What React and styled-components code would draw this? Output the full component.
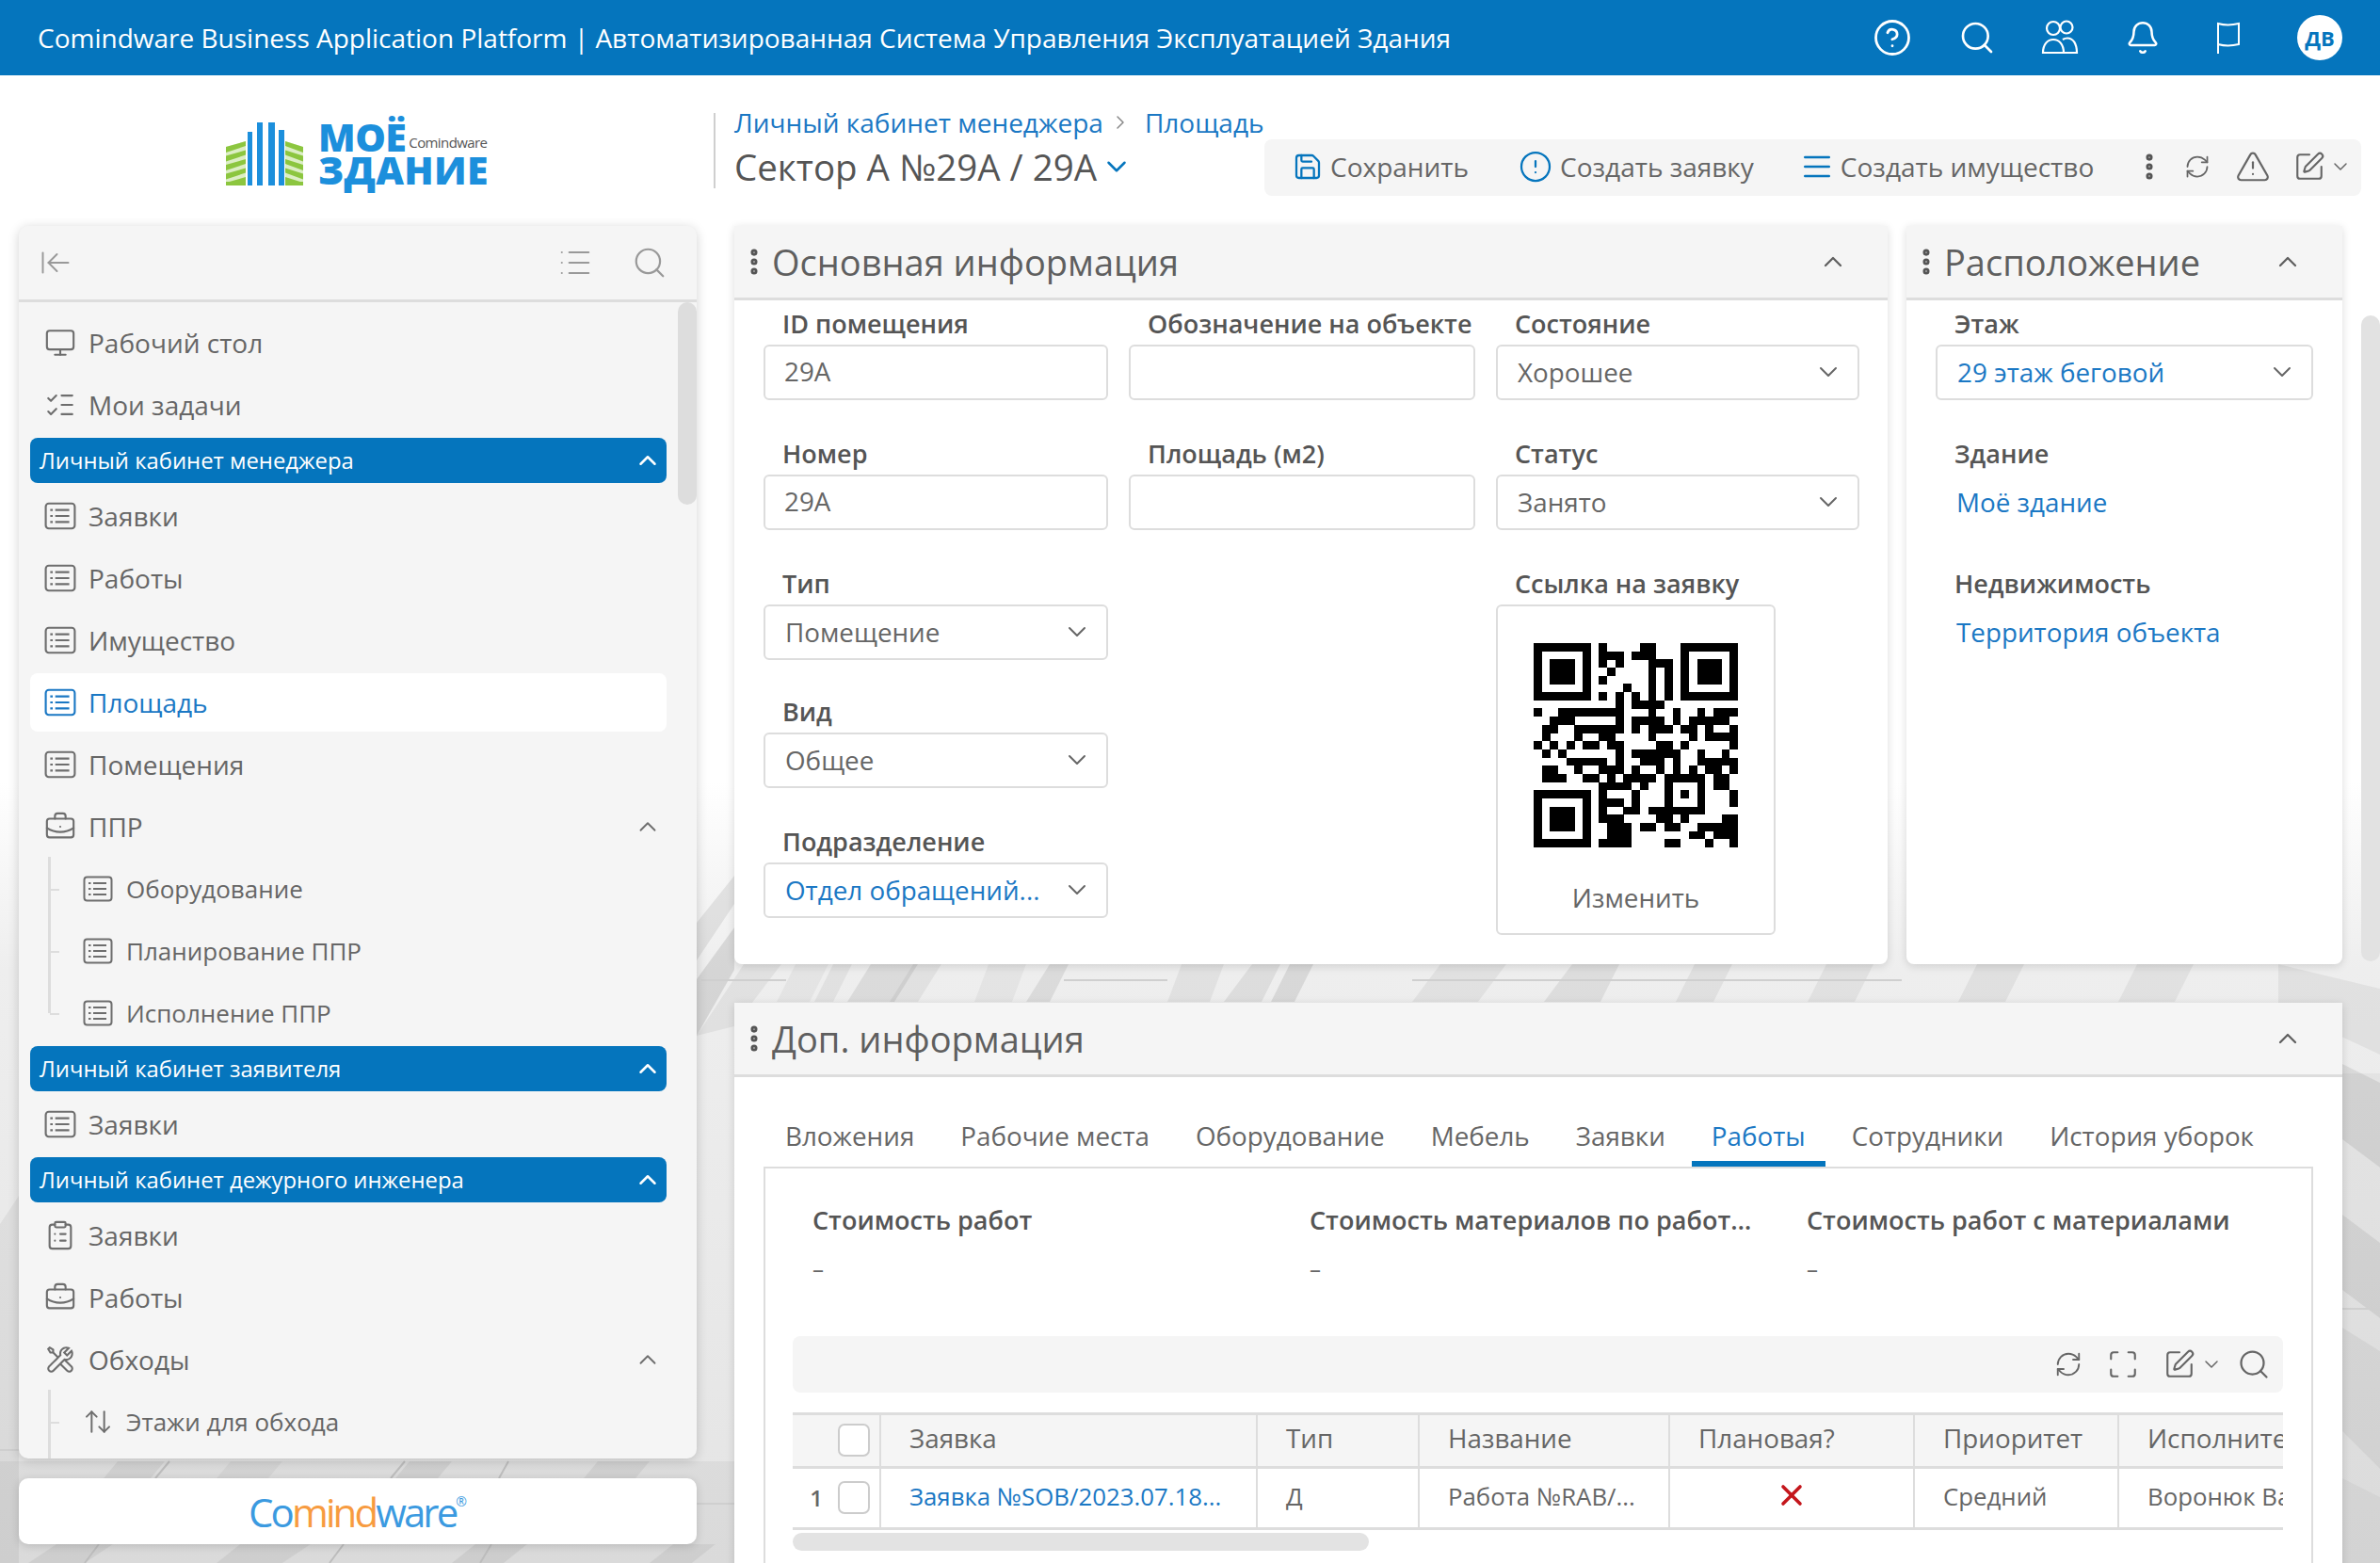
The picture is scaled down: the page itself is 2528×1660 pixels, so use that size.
import React from 'react';
import styled, { createGlobalStyle } from 'styled-components';
import {
  ArrowLeftToLine, ArrowUpDown, Bell, BriefcaseBusiness, ChevronDown, ChevronUp, ChevronRight,
  CircleAlert, CircleHelp, ClipboardList, EllipsisVertical, ListChecks, Maximize, Monitor,
  RefreshCw, Save, Search, SquarePen, TriangleAlert, AlignJustify, List, X,
} from 'lucide-react';
import { LiaToolsSolid } from 'react-icons/lia';

const BLUE = '#0575bd';
const LINK = '#1b78c4';
const TEXT = '#666';

const GlobalStyle = createGlobalStyle`
  html, body { margin: 0; padding: 0; height: 100%; }
  body {
    font-family: "Open Sans", "Noto Sans", sans-serif;
    color: ${TEXT};
    overflow: hidden;
    background: #fff;
  }
  * { box-sizing: border-box; }
`;

const Page = styled.div`
  position: relative;
  height: 100vh;
  overflow: hidden;
  display: flex;
  flex-direction: column;
  isolation: isolate;
`;

const Backdrop = styled.svg`
  position: absolute;
  inset: 0;
  z-index: -1;
`;

/* шапка */
const TopHeader = styled.header`
  flex: none;
  height: 80px;
  background: ${BLUE};
  color: #fff;
  display: flex;
  align-items: center;
  padding: 0 40px;
`;

const AppTitle = styled.div`
  font-size: 28px;
  white-space: nowrap;
  flex: 1;
`;

const HeaderIcons = styled.div`
  display: flex;
  align-items: center;
  margin-right: -27px;
  color: #fff;
`;

const HeaderSlot = styled.span`
  display: flex;
  justify-content: center;
  width: ${(p) => p.$w}px;
`;

const Avatar = styled.div`
  width: 48px;
  height: 48px;
  border-radius: 50%;
  background: #fff;
  color: ${BLUE};
  font-size: 22px;
  font-weight: 700;
  display: flex;
  align-items: center;
  justify-content: center;
`;

/* строка с логотипом и заголовком */
const TopRow = styled.div`
  flex: none;
  height: 160px;
  display: flex;
  align-items: flex-start;
  padding-right: 20px;
`;

const LogoArea = styled.div`
  flex: none;
  width: 758px;
  height: 160px;
  padding: 38px 0 0 240px;
  display: flex;
  gap: 16px;
`;

const LogoWords = styled.div`
  display: flex;
  flex-direction: column;
  color: #1c8fdc;
  font-weight: 800;
`;

const LogoLine = styled.div`
  display: flex;
  align-items: flex-end;
  height: ${(p) => p.$h}px;
  line-height: 33px;
  font-size: ${(p) => p.$size}px;
  letter-spacing: ${(p) => p.$spacing || 0}px;
  white-space: nowrap;
`;

const LogoVendor = styled.span`
  font-size: 15px;
  line-height: 18px;
  font-weight: 400;
  color: #555;
  letter-spacing: -0.6px;
  margin: 0 0 2px 3px;
`;

const TitleBlock = styled.div`
  position: relative;
  flex: none;
  width: 585px;
  padding: 32px 0 0 22px;

  &::before {
    content: '';
    position: absolute;
    left: 0;
    top: 40px;
    width: 2px;
    height: 80px;
    background: #cfcfcf;
  }
`;

const Crumbs = styled.div`
  height: 36px;
  display: flex;
  align-items: center;
  gap: 6px;
  font-size: 28px;
  color: ${LINK};
  white-space: nowrap;
`;

const CrumbArrow = styled.span`
  display: flex;
  color: #888;
  margin-right: 8px;
`;

const RecordTitle = styled.div`
  height: 58px;
  display: flex;
  align-items: center;
  gap: 4px;
  font-size: 38.5px;
  color: #555;
  white-space: nowrap;
`;

const Toolbar = styled.div`
  flex: none;
  margin: 68px 0 0 auto;
  width: 1165px;
  height: 60px;
  background: #f5f5f5;
  border-radius: 8px;
  display: flex;
  align-items: center;
  padding: 0 10px 2px 30px;
`;

const ToolButton = styled.div`
  display: flex;
  align-items: center;
  gap: 8px;
  font-size: 28px;
  color: ${TEXT};
  margin-right: ${(p) => p.$gap}px;
  white-space: nowrap;

  svg { color: ${BLUE}; flex: none; }
`;

const ToolIcon = styled.span`
  display: flex;
  color: #666;
  margin-right: ${(p) => p.$gap}px;
`;

/* основная часть */
const Workspace = styled.div`
  flex: 1;
  min-height: 0;
  display: grid;
  grid-template-columns: 720px 1708px;
  grid-template-rows: minmax(0, 1fr);
  column-gap: 40px;
  padding-left: 20px;
`;

const LeftColumn = styled.aside`
  display: flex;
  flex-direction: column;
  gap: 21px;
  padding-bottom: 20px;
  min-height: 0;
`;

const Sidebar = styled.nav`
  position: relative;
  flex: 1;
  min-height: 0;
  overflow: hidden;
  background: #f5f5f5;
  border-radius: 10px;
  box-shadow: 0 2px 12px rgba(0, 0, 0, 0.18);
`;

const SidebarTop = styled.div`
  height: 81px;
  border-bottom: 3px solid #ddd;
  display: flex;
  align-items: center;
  padding: 0 31px 0 21px;
  color: #999;
`;

const SidebarTools = styled.div`
  margin-left: auto;
  display: flex;
  align-items: center;
  gap: 41px;
`;

const SidebarThumb = styled.div`
  position: absolute;
  right: 0;
  top: 81px;
  width: 20px;
  height: 215px;
  border-radius: 10px;
  background: #ddd;
`;

const NavList = styled.div`
  display: flex;
  flex-direction: column;
  gap: 4px;
  padding: 12px 32px 0 12px;
`;

const NavGroup = styled.div`
  flex: none;
  height: 48px;
  border-radius: 8px;
  background: ${BLUE};
  color: #fff;
  font-size: 23.85px;
  font-weight: 500;
  display: flex;
  align-items: center;
  justify-content: space-between;
  padding: 0 5px 0 10px;
`;

const NavItem = styled.div`
  flex: none;
  position: relative;
  height: 62px;
  border-radius: 8px;
  display: flex;
  align-items: center;
  gap: ${(p) => (p.$sub ? 14 : 13)}px;
  padding-left: ${(p) => (p.$sub ? 56 : 15)}px;
  padding-right: 5px;
  font-size: ${(p) => (p.$sub ? 26 : 28)}px;
  background: ${(p) => (p.$active ? '#fff' : 'transparent')};
  color: ${(p) => (p.$active ? LINK : TEXT)};

  svg { color: ${(p) => (p.$active ? LINK : '#6e6e6e')}; flex: none; }

  ${(p) => p.$sub && `
    &::before {
      content: '';
      position: absolute;
      left: 21px;
      top: 50%;
      width: 10px;
      height: 2px;
      background: #ddd;
    }
  `}
`;

const NavLabel = styled.span`
  flex: 1;
  white-space: nowrap;
`;

const SubList = styled.div`
  position: relative;
  display: flex;
  flex-direction: column;
  gap: 4px;

  &::before {
    content: '';
    position: absolute;
    left: 19px;
    top: -3px;
    bottom: ${(p) => (p.$open ? '-40px' : '31px')};
    width: 3px;
    background: #ddd;
  }
`;

const VendorCard = styled.div`
  flex: none;
  height: 70px;
  border-radius: 10px;
  background: #fff;
  box-shadow: 0 2px 10px rgba(0, 0, 0, 0.15);
  display: flex;
  align-items: center;
  justify-content: center;
`;

const VendorName = styled.div`
  font-size: 42px;
  letter-spacing: -2.9px;
  color: #3b9ae0;

  span { color: #f79b40; }
  sup { font-size: 14px; letter-spacing: 0; vertical-align: 22px; line-height: 0; }
`;

const MainColumn = styled.main`
  display: flex;
  flex-direction: column;
  gap: 41px;
`;

const PanelRow = styled.div`
  display: flex;
  gap: 20px;
`;

const Panel = styled.section`
  flex: ${(p) => (p.$width ? `none` : 1)};
  width: ${(p) => (p.$width ? `${p.$width}px` : 'auto')};
  background: #fff;
  border-radius: 0 0 8px 8px;
  box-shadow: 0 2px 10px rgba(0, 0, 0, 0.14);
  ${(p) => p.$height && `height: ${p.$height}px;`}
`;

const PanelHead = styled.div`
  height: 79px;
  background: #f5f5f5;
  border-bottom: 3px solid #ddd;
  display: flex;
  align-items: center;
  padding: 0 42px 0 4px;
  font-size: 38px;
  color: #5f5f5f;
`;

const PanelName = styled.span`
  flex: 1;
  margin-left: 2px;
  white-space: nowrap;
`;

const FormGrid = styled.div`
  display: grid;
  grid-template-columns: 366px 368px 386px;
  grid-template-rows: 138px 138px 136px 138px auto;
  column-gap: 22px;
  padding: 7px 0 0 31px;
`;

const SideForm = styled.div`
  display: grid;
  grid-template-rows: 138px 138px auto;
  padding: 7px 31px 0 31px;
`;

const Field = styled.div`
  ${(p) => p.$left && 'grid-column: 1;'}
  ${(p) => p.$qr && 'grid-column: 3; grid-row: 3 / span 3;'}
`;

const Label = styled.div`
  height: 40px;
  display: flex;
  align-items: center;
  padding: 0 0 5px 20px;
  font-size: 27px;
  font-weight: 600;
  color: #555;
  white-space: nowrap;
`;

const TextInput = styled.input`
  display: block;
  width: 100%;
  height: 59px;
  border: 2px solid #ddd;
  border-radius: 6px;
  background: #fff;
  padding: 0 20px;
  padding-bottom: 4px;
  font: inherit;
  font-size: 27.8px;
  color: ${TEXT};
  outline: none;
`;

const SelectBox = styled.div`
  height: 59px;
  border: 2px solid #ddd;
  border-radius: 6px;
  background: #fff;
  display: flex;
  align-items: center;
  justify-content: space-between;
  padding: 0 15px 2px 21px;
  font-size: 27.8px;
  color: ${(p) => (p.$link ? LINK : TEXT)};
  white-space: nowrap;

  svg { color: #666; flex: none; }
`;

const LinkValue = styled.div`
  height: 59px;
  display: flex;
  align-items: center;
  padding: 0 0 2px 22px;
  font-size: 27.8px;
  color: ${LINK};
  white-space: nowrap;
`;

const QrCard = styled.div`
  width: 297px;
  height: 351px;
  border: 2px solid #ddd;
  border-radius: 6px;
  display: flex;
  flex-direction: column;
  align-items: center;
  padding-top: 39px;
  gap: 34px;
  font-size: 27.8px;
  color: ${TEXT};
`;

const Body = styled.div`
  padding-top: 35px;
`;

const Tabs = styled.div`
  display: flex;
  gap: 7px;
  padding-left: 33px;
`;

const Tab = styled.div`
  height: 60px;
  padding: 0 21px 0;
  display: flex;
  align-items: center;
  font-size: 27.8px;
  white-space: nowrap;
  color: ${(p) => (p.$active ? LINK : TEXT)};
  border-bottom: 6px solid ${(p) => (p.$active ? BLUE : 'transparent')};
`;

const TabBox = styled.div`
  margin: 0 31px;
  border: 2px solid #ddd;
  border-bottom: 0;
  padding: 35px 30px 0 29px;
  height: 500px;
`;

const Costs = styled.div`
  display: grid;
  grid-template-columns: 528px 528px 1fr;
`;

const CostCell = styled.div`
  padding-left: 21px;
`;

const CostLabel = styled.div`
  height: 40px;
  width: 470px;
  line-height: 40px;
  font-size: 27px;
  font-weight: 600;
  color: #555;
  white-space: nowrap;
  overflow: hidden;
  text-overflow: ellipsis;
`;

const CostValue = styled.div`
  margin-top: 14px;
  height: 36px;
  line-height: 36px;
  font-size: 24px;
`;

const GridToolbar = styled.div`
  margin-top: 53px;
  height: 60px;
  background: #f5f5f5;
  border-radius: 8px;
  display: flex;
  align-items: center;
  justify-content: flex-end;
  gap: 26px;
  padding-right: 13px;
  color: #666;
`;

const EditGroup = styled.span`
  display: flex;
  align-items: center;
  gap: 5px;
  margin-right: -11px;
`;

const TableWrap = styled.div`
  margin-top: 21px;
  overflow: hidden;
  border-top: 3px solid #ddd;
`;

const Table = styled.table`
  table-layout: fixed;
  width: 1658px;
  border-collapse: collapse;
  font-size: 27.8px;
`;

const Th = styled.th`
  height: 55px;
  background: #f5f5f5;
  border-right: 2px solid #ddd;
  border-bottom: 3px solid #ddd;
  font-weight: 400;
  text-align: left;
  padding: 0 0 5px 30px;
  color: ${TEXT};
  white-space: nowrap;
`;

const RowHeadCell = styled(Th)`
  padding: 0;
`;

const Td = styled.td`
  height: 65px;
  border-right: 2px solid #ddd;
  border-bottom: 3px solid #ddd;
  padding: 0 0 3px 30px;
  color: ${(p) => (p.$link ? LINK : TEXT)};
  font-size: 25.8px;
  white-space: nowrap;
  overflow: hidden;
`;

const RowNumberCell = styled(Td)`
  padding: 0;
`;

const MarkCell = styled(Td)`
  padding: 0 0 8px 0;
  text-align: center;
  svg { color: #c4161c; vertical-align: middle; }
`;

const RowHead = styled.div`
  display: flex;
  align-items: center;
  justify-content: flex-end;
  gap: 16px;
  padding-right: 10px;
  font-weight: 600;
  font-size: 24px;
`;

const CheckBox = styled.span`
  display: block;
  width: 34px;
  height: 35px;
  border: 2px solid #ccc;
  border-radius: 7px;
  background: #fff;
`;

const HScroll = styled.div`
  margin-top: 3px;
  width: 612px;
  height: 19px;
  border-radius: 10px;
  background: #e3e3e3;
`;

const PageThumb = styled.div`
  position: absolute;
  right: 0;
  top: 335px;
  width: 20px;
  height: 686px;
  border-radius: 10px;
  background: #e2e2e2;
`;

function ListBoxIcon({ size = 32 }) {
  return (
    <svg width={size} height={size} viewBox="0 0 32 32" fill="none" stroke="currentColor" strokeWidth="2">
      <rect x="1.5" y="3.5" width="29" height="25" rx="3" />
      <path d="M11 10h14M11 16h14M11 22h14" />
      <path d="M6 10h2.500M6 16h2.500M6 22h2.500" />
    </svg>
  );
}

function FlagIcon() {
  return (
    <svg width="32" height="36" viewBox="0 0 32 36" fill="none" stroke="currentColor" strokeWidth="2">
      <path d="M5 35V3c7 2 14 2 22 0v22c-8 2-15 2-22 0" />
    </svg>
  );
}

function PeopleIcon() {
  return (
    <svg width="44" height="44" viewBox="0 0 44 44" fill="none" stroke="currentColor" strokeWidth="2.2">
      <circle cx="15" cy="12" r="7" />
      <circle cx="29" cy="11" r="6.5" />
      <path d="M4 38c0-9 5-14 11-14s11 5 11 14z" />
      <path d="M25 24c1.500-1 3-1.500 5-1.500 6 0 10 6 10 15.500H26" />
    </svg>
  );
}

function Building() {
  const bars = [[23, 10, 5], [33, 0, 6], [45, 0, 7], [56, 8, 6]];
  const stripes = [0, 9.5, 19, 28.5, 38];
  return (
    <svg width="82" height="67" viewBox="0 0 82 67" style={{ marginTop: 12, flex: 'none' }}>
      <path d="M0 26L21 20V67H0ZM82 26L63 20V67H82Z" fill="#8cc63f" opacity="0.3" />
      {stripes.map((y) => (
        <g key={y}>
          <path d={`M0 ${y + 26}L21 ${y + 20}V${y + 25}L0 ${y + 32}Z`} fill="#8cc63f" />
          <path d={`M82 ${y + 26}L63 ${y + 20}V${y + 25}L82 ${y + 32}Z`} fill="#8cc63f" />
        </g>
      ))}
      <path d="M0 63H21V67H0ZM63 63H82V67H63Z" fill="#8cc63f" />
      {bars.map(([x, y, w]) => (
        <rect key={x} x={x} y={y} width={w} height={67 - y} fill="#1c8fdc" />
      ))}
    </svg>
  );
}

const QR_ROWS = [
  '#######.#....##...#######',
  '#.....#.###.###...#.....#',
  '#.###.#.#.#...###.#.###.#',
  '#.###.#..#....#.#.#.###.#',
  '#.###.#.#.....#.#.#.###.#',
  '#.....#....#..#.#.#.....#',
  '#######.#.#.#.#.#.#######',
  '..........#.####.........',
  '#..########...#..#..#.###',
  '..###.....#.####.#.#####.',
  '.##..######.#.###.##.#..#',
  '.#...#..##....#....#.####',
  '#.#.#.##.##....##.#.....#',
  '.#.#......#.######..#..#.',
  '....#####.#..###.#..#####',
  '.##..#..###.#..#.#.#.##.#',
  '.###..##.#.####.#####.##.',
  '........####.#..#...#.##.',
  '#######.#...#...#.#.#...#',
  '#.....#.###.#...#...#...#',
  '#.###.#.#..##.#######....',
  '#.###.#.###....##.#....##',
  '#.###.#..###.##.##..#####',
  '#.....#..###.......##.###',
  '#######.####....##...#..#',
];

function QrCode() {
  return (
    <svg width="217" height="217" viewBox="0 0 25 25" shapeRendering="crispEdges">
      {QR_ROWS.map((row, y) =>
        row.split('').map((c, x) => (c === '#' ? <rect key={`${x}-${y}`} x={x} y={y} width="1.02" height="1.02" fill="#000" /> : null))
      )}
    </svg>
  );
}

const BANDS = [
  // левый нижний угол, под меню
  ['M0 1300L20 1270V1660H0Z', 0.05],
  ['M0 1552L780 1552V1660H0Z', 0.045],
  ['M110 1570L125 1552H175L160 1570Z', 0.05],
  ['M230 1570L245 1552H300L285 1570Z', 0.04],
  ['M420 1570L435 1552H480L465 1570Z', 0.06],
  ['M620 1570L635 1552H690L675 1570Z', 0.05],
  ['M30 1660L60 1640H120L90 1660Z', 0.05],
  ['M230 1660L255 1640H330L300 1660Z', 0.05],
  ['M480 1660L505 1640H560L535 1660Z', 0.06],
  ['M690 1660L715 1640H760L735 1660Z', 0.05],
  // зазор у панелей
  ['M740 1040L780 985V1030L740 1100Z', 0.1],
  ['M740 1100L790 1024H830L780 1090Z', 0.05],
  ['M740 980L780 930V960L740 1020Z', 0.08],
  ['M825 1064L845 1024H880L860 1064Z', 0.04],
  ['M865 1064L885 1024H905L885 1064Z', 0.05],
  ['M900 1064L925 1024H975L950 1064Z', 0.08],
  ['M945 1064L970 1024H1000L975 1064Z', 0.05],
  ['M1035 1064L1050 1024H1090L1075 1064Z', 0.04],
  ['M1090 1064L1115 1024H1135L1115 1064Z', 0.08],
  ['M1240 1064L1255 1024H1300L1285 1064Z', 0.05],
  ['M1300 1064L1330 1024H1360L1340 1064Z', 0.07],
  ['M1350 1064L1370 1024H1395L1375 1064Z', 0.09],
  ['M1500 1064L1530 1024H1600L1570 1064Z', 0.05],
  ['M1640 1064L1670 1024H1720L1700 1064Z', 0.07],
  ['M1780 1064L1800 1024H1840L1820 1064Z', 0.06],
  ['M1920 1064L1940 1024H1990L1970 1064Z', 0.05],
  ['M2080 1064L2100 1024H2150L2130 1064Z', 0.06],
  ['M2250 1064L2270 1024H2330L2310 1064Z', 0.05],
  // справа
  ['M2420 1024L2528 1050V1120L2420 1070Z', 0.05],
  ['M2488 1130L2528 1150V1240L2488 1210Z', 0.08],
  ['M2488 1290L2528 1320V1400L2488 1370Z', 0.07],
  ['M2488 1410L2528 1435V1560L2488 1520Z', 0.05],
  ['M2488 1570L2528 1590V1660H2488Z', 0.04],
  ['M2488 1140L2528 1140V1660H2488Z', 0.035],
];

function PageBackdrop() {
  return (
    <Backdrop width="2528" height="1660" viewBox="0 0 2528 1660">
      <defs>
        <linearGradient id="wall" x1="0" y1="0" x2="0" y2="1">
          <stop offset="0.5" stopColor="#ffffff" />
          <stop offset="0.62" stopColor="#eeeeee" />
          <stop offset="1" stopColor="#e4e4e4" />
        </linearGradient>
      </defs>
      <rect width="2528" height="1660" fill="url(#wall)" />
      {BANDS.map(([d, o]) => (
        <path key={d} d={d} fill="#000" opacity={o} />
      ))}
      <path d="M745 1041H835M1130 1041H1240M1500 1041H2020" stroke="#cfcfcf" strokeWidth="2" />
      <path d="M2488 1390H2528M0 1540H20M740 1597H780" stroke="#cfcfcf" strokeWidth="2" />
      <path d="M165 1570L180 1552M415 1570L430 1552M530 1570L540 1552M90 1660L105 1640M350 1660L365 1640M510 1660L522 1640" stroke="#bdbdbd" strokeWidth="2" />
    </Backdrop>
  );
}

function Item({ icon, label, active, sub, open }) {
  return (
    <NavItem $active={active} $sub={sub}>
      {icon}
      <NavLabel>{label}</NavLabel>
      {open && <ChevronUp size={30} strokeWidth={1.5} />}
    </NavItem>
  );
}

function Group({ label }) {
  return (
    <NavGroup>
      {label}
      <ChevronUp size={30} strokeWidth={2} />
    </NavGroup>
  );
}

function Select({ value, link }) {
  return (
    <SelectBox $link={link}>
      {value}
      <ChevronDown size={32} strokeWidth={1.5} />
    </SelectBox>
  );
}

function Dots() {
  return <EllipsisVertical size={34} strokeWidth={3} style={{ flex: 'none', color: '#555' }} />;
}

const listIcon = <ListBoxIcon size={34} />;
const subIcon = <ListBoxIcon />;
const caseIcon = <BriefcaseBusiness size={34} strokeWidth={1.5} />;

export default function App() {
  return (
    <>
      <GlobalStyle />
      <Page>
        <PageBackdrop />
        <TopHeader>
          <AppTitle>Comindware Business Application Platform | Автоматизированная Система Управления Эксплуатацией Здания</AppTitle>
          <HeaderIcons>
            <HeaderSlot $w={90}><CircleHelp size={42} strokeWidth={1.6} /></HeaderSlot>
            <HeaderSlot $w={89}><Search size={40} strokeWidth={1.6} /></HeaderSlot>
            <HeaderSlot $w={87}><PeopleIcon /></HeaderSlot>
            <HeaderSlot $w={90}><Bell size={38} strokeWidth={1.6} /></HeaderSlot>
            <HeaderSlot $w={92}><FlagIcon /></HeaderSlot>
            <HeaderSlot $w={102}><Avatar>ДВ</Avatar></HeaderSlot>
          </HeaderIcons>
        </TopHeader>

        <TopRow>
          <LogoArea>
            <Building />
            <LogoWords>
              <LogoLine $h={44} $size={41} $spacing={-0.5}>МОЁ<LogoVendor>Comindware</LogoVendor></LogoLine>
              <LogoLine $h={35} $size={41} $spacing={0.3}>ЗДАНИЕ</LogoLine>
            </LogoWords>
          </LogoArea>
          <TitleBlock>
            <Crumbs>
              Личный кабинет менеджера
              <CrumbArrow><ChevronRight size={24} strokeWidth={1.5} /></CrumbArrow>
              Площадь
            </Crumbs>
            <RecordTitle>
              Сектор А №29А / 29А
              <ChevronDown size={34} strokeWidth={1.8} color={BLUE} />
            </RecordTitle>
          </TitleBlock>
          <Toolbar>
            <ToolButton $gap={53}><Save size={32} strokeWidth={1.7} />Сохранить</ToolButton>
            <ToolButton $gap={50}><CircleAlert size={36} strokeWidth={1.5} />Создать заявку</ToolButton>
            <ToolButton $gap={42}><AlignJustify size={34} strokeWidth={1.8} />Создать имущество</ToolButton>
            <ToolIcon $gap={20}><Dots /></ToolIcon>
            <ToolIcon $gap={26}><RefreshCw size={28} strokeWidth={1.5} /></ToolIcon>
            <ToolIcon $gap={24}><TriangleAlert size={38} strokeWidth={1.4} /></ToolIcon>
            <ToolIcon $gap={4}><SquarePen size={34} strokeWidth={1.5} /></ToolIcon>
            <ToolIcon $gap={0}><ChevronDown size={24} strokeWidth={1.5} /></ToolIcon>
          </Toolbar>
        </TopRow>

        <Workspace>
          <LeftColumn>
            <Sidebar>
              <SidebarTop>
                <ArrowLeftToLine size={36} strokeWidth={1.3} />
                <SidebarTools>
                  <List size={38} strokeWidth={1.3} />
                  <Search size={38} strokeWidth={1.4} />
                </SidebarTools>
              </SidebarTop>
              <NavList>
                <Item icon={<Monitor size={34} strokeWidth={1.5} />} label="Рабочий стол" />
                <Item icon={<ListChecks size={34} strokeWidth={1.5} />} label="Мои задачи" />
                <Group label="Личный кабинет менеджера" />
                <Item icon={listIcon} label="Заявки" />
                <Item icon={listIcon} label="Работы" />
                <Item icon={listIcon} label="Имущество" />
                <Item icon={listIcon} label="Площадь" active />
                <Item icon={listIcon} label="Помещения" />
                <Item icon={caseIcon} label="ППР" open />
                <SubList>
                  <Item icon={subIcon} label="Оборудование" sub />
                  <Item icon={subIcon} label="Планирование ППР" sub />
                  <Item icon={subIcon} label="Исполнение ППР" sub />
                </SubList>
                <Group label="Личный кабинет заявителя" />
                <Item icon={listIcon} label="Заявки" />
                <Group label="Личный кабинет дежурного инженера" />
                <Item icon={<ClipboardList size={34} strokeWidth={1.5} />} label="Заявки" />
                <Item icon={caseIcon} label="Работы" />
                <Item icon={<LiaToolsSolid size={34} />} label="Обходы" open />
                <SubList $open>
                  <Item icon={<ArrowUpDown size={32} strokeWidth={1.5} />} label="Этажи для обхода" sub />
                </SubList>
              </NavList>
              <SidebarThumb />
            </Sidebar>
            <VendorCard>
              <VendorName>Co<span>mind</span>ware<sup>®</sup></VendorName>
            </VendorCard>
          </LeftColumn>

          <MainColumn>
            <PanelRow>
              <Panel $width={1225} $height={784}>
                <PanelHead>
                  <Dots />
                  <PanelName>Основная информация</PanelName>
                  <ChevronUp size={32} strokeWidth={1.7} />
                </PanelHead>
                <FormGrid>
                  <Field><Label>ID помещения</Label><TextInput readOnly value="29А" /></Field>
                  <Field><Label>Обозначение на объекте</Label><TextInput readOnly value="" /></Field>
                  <Field><Label>Состояние</Label><Select value="Хорошее" /></Field>
                  <Field><Label>Номер</Label><TextInput readOnly value="29А" /></Field>
                  <Field><Label>Площадь (м2)</Label><TextInput readOnly value="" /></Field>
                  <Field><Label>Статус</Label><Select value="Занято" /></Field>
                  <Field $left><Label>Тип</Label><Select value="Помещение" /></Field>
                  <Field $qr>
                    <Label>Ссылка на заявку</Label>
                    <QrCard>
                      <QrCode />
                      Изменить
                    </QrCard>
                  </Field>
                  <Field $left><Label>Вид</Label><Select value="Общее" /></Field>
                  <Field $left><Label>Подразделение</Label><Select value="Отдел обращений..." link /></Field>
                </FormGrid>
              </Panel>
              <Panel $width={463} $height={784}>
                <PanelHead>
                  <Dots />
                  <PanelName>Расположение</PanelName>
                  <ChevronUp size={32} strokeWidth={1.7} />
                </PanelHead>
                <SideForm>
                  <Field><Label>Этаж</Label><Select value="29 этаж беговой" link /></Field>
                  <Field><Label>Здание</Label><LinkValue>Моё здание</LinkValue></Field>
                  <Field><Label>Недвижимость</Label><LinkValue>Территория объекта</LinkValue></Field>
                </SideForm>
              </Panel>
            </PanelRow>

            <Panel>
              <PanelHead>
                <Dots />
                <PanelName>Доп. информация</PanelName>
                <ChevronUp size={32} strokeWidth={1.7} />
              </PanelHead>
              <Body>
                <Tabs>
                  <Tab>Вложения</Tab>
                  <Tab>Рабочие места</Tab>
                  <Tab>Оборудование</Tab>
                  <Tab>Мебель</Tab>
                  <Tab>Заявки</Tab>
                  <Tab $active>Работы</Tab>
                  <Tab>Сотрудники</Tab>
                  <Tab>История уборок</Tab>
                </Tabs>
                <TabBox>
                  <Costs>
                    <CostCell><CostLabel>Стоимость работ</CostLabel><CostValue>–</CostValue></CostCell>
                    <CostCell><CostLabel>Стоимость материалов по работам</CostLabel><CostValue>–</CostValue></CostCell>
                    <CostCell><CostLabel>Стоимость работ с материалами</CostLabel><CostValue>–</CostValue></CostCell>
                  </Costs>
                  <GridToolbar>
                    <RefreshCw size={30} strokeWidth={1.5} />
                    <Maximize size={34} strokeWidth={1.5} />
                    <EditGroup>
                      <SquarePen size={34} strokeWidth={1.5} />
                      <ChevronDown size={24} strokeWidth={1.5} />
                    </EditGroup>
                    <Search size={36} strokeWidth={1.5} />
                  </GridToolbar>
                  <TableWrap>
                    <Table>
                      <colgroup>
                        <col width="93" /><col width="400" /><col width="172" /><col width="266" />
                        <col width="260" /><col width="217" /><col width="250" />
                      </colgroup>
                      <thead>
                        <tr>
                          <RowHeadCell><RowHead><CheckBox /></RowHead></RowHeadCell>
                          <Th>Заявка</Th>
                          <Th>Тип</Th>
                          <Th>Название</Th>
                          <Th>Плановая?</Th>
                          <Th>Приоритет</Th>
                          <Th>Исполнитель</Th>
                        </tr>
                      </thead>
                      <tbody>
                        <tr>
                          <RowNumberCell><RowHead>1<CheckBox /></RowHead></RowNumberCell>
                          <Td $link>Заявка №SOB/2023.07.18...</Td>
                          <Td>Д</Td>
                          <Td>Работа №RAB/...</Td>
                          <MarkCell><X size={36} strokeWidth={2.4} /></MarkCell>
                          <Td>Средний</Td>
                          <Td>Воронюк Валерий</Td>
                        </tr>
                      </tbody>
                    </Table>
                  </TableWrap>
                  <HScroll />
                </TabBox>
              </Body>
            </Panel>
          </MainColumn>
        </Workspace>
        <PageThumb />
      </Page>
    </>
  );
}
